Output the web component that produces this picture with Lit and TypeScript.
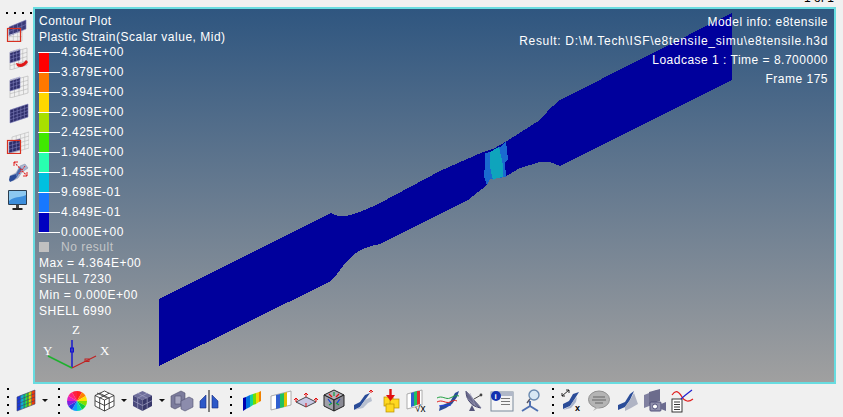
import { LitElement, html, css, svg } from "lit";
import { customElement } from "lit/decorators.js";

const NAVY = "#00009c";

function sheet(x: number, y: number, w: number, h: number, sk: number, cols: number, rows: number, fill: string, stroke: string) {
  const lines = [];
  for (let i = 0; i <= cols; i++) {
    const px = x + (w * i) / cols;
    const top = y + sk - (sk * i) / cols;
    lines.push(svg`<line x1=${px} y1=${top} x2=${px} y2=${top + h} stroke=${stroke} stroke-width="0.6"/>`);
  }
  for (let j = 0; j <= rows; j++) {
    const d = (h * j) / rows;
    lines.push(svg`<line x1=${x} y1=${y + sk + d} x2=${x + w} y2=${y + d} stroke=${stroke} stroke-width="0.6"/>`);
  }
  return svg`<polygon points="${x},${y + sk} ${x + w},${y} ${x + w},${y + h} ${x},${y + sk + h}" fill=${fill}/>${lines}`;
}

const sideIcons = [
  svg`${sheet(4, 10, 13, 13, 0, 3, 3, "none", "#b8b8b8")}
      <polygon points="4,9 21,2 21,11 4,17" fill="#3a3a78"/>${sheet(4, 2, 17, 9, 7, 4, 2, "none", "#7c7cb8")}
      <rect x="2.5" y="10.5" width="13" height="13" fill="none" stroke="#d83020" stroke-width="1.2"/>`,
  svg`${sheet(5, 2, 17, 17, 5, 4, 4, "none", "#b4b4b4")}
      <polygon points="5,7 15,4 15,14 5,17" fill="#30306c"/>${sheet(5, 3, 10, 11, 3, 3, 3, "none", "#8080bc")}
      <path d="M11 17 C16 19 19 17 21 14 L23 16 C20 21 15 22 12 20Z" fill="#e01818"/>`,
  svg`${sheet(5, 2, 18, 17, 5, 4, 4, "none", "#b4b4b4")}
      <polygon points="5,7 15,4 15,14 5,17" fill="#30306c"/>${sheet(5, 3, 10, 11, 3, 3, 3, "none", "#8080bc")}`,
  svg`<polygon points="5,8 23,2 23,15 5,21" fill="#30306c"/>${sheet(5, 2, 18, 13, 6, 5, 4, "none", "#7c7cb8")}`,
  svg`${sheet(7, 2, 17, 16, 5, 4, 4, "none", "#b8b8b8")}
      <polygon points="4,12 15,9 15,20 4,23" fill="#2c2c68"/>${sheet(4, 9, 11, 11, 3, 3, 3, "none", "#8080bc")}
      <rect x="2.5" y="10.5" width="13" height="13" fill="none" stroke="#d83020" stroke-width="1.2"/>`,
  svg`<path d="M5 22 L5 18 L11 15 L15 8 L20 6 L23 10 L17 14 L13 20 L7 23Z" fill="#a8b4d0" stroke="#808ca8" stroke-width=".5"/>
      <path d="M4 22 L5 18 L11 16 L12 19 L9 22 L5 24Z" fill="#2a4c98"/><path d="M11 16 L15 9 L17 11 L12 19Z" fill="#4a6cb0"/>
      <path d="M9 4 L22 18" stroke="#e02020" stroke-width="1.1" stroke-dasharray="2 1"/>
      <path d="M9 4 L13 4 M9 4 L9 8 M22 18 L18 18 M22 18 L22 14" stroke="#e02020" stroke-width="1"/>
      <path d="M20 8 L14 16" stroke="#e02020" stroke-width="1" stroke-dasharray="2 1"/>`,
  svg`<g transform="translate(0,2)"><rect x="3" y="2" width="19" height="15" rx="1" fill="#2c3e50"/>
      <rect x="4" y="3" width="17" height="13" fill="#3c8edc"/>
      <path d="M4 3 H21 V7 C15 10 9 8 4 13Z" fill="#8cc8f0"/>
      <rect x="11" y="17" width="3" height="3" fill="#444"/><rect x="7.5" y="20" width="10" height="2" fill="#222"/></g>`,
];

const dots = svg`<g fill="#000"><rect x="1" y="1" width="2" height="2"/><rect x="1" y="9" width="2" height="2"/><rect x="1" y="17" width="2" height="2"/><rect x="1" y="25" width="2" height="2"/></g>`;
const caret = svg`<polygon points="0,0 6,0 3,3" fill="#111"/>`;

function wheel() {
  const cols = ["#ff2020", "#ff8000", "#ffe000", "#80e000", "#10d040", "#10d0c0", "#10a0ff", "#2040e0", "#8020e0", "#e020c0", "#ff2080", "#ff2040"];
  const out = [];
  for (let i = 0; i < 12; i++) {
    const a = (i * Math.PI) / 6;
    const b = ((i + 1) * Math.PI) / 6;
    out.push(svg`<path d="M10 10 L${10 + 10 * Math.sin(a)} ${10 - 10 * Math.cos(a)} A10 10 0 0 1 ${10 + 10 * Math.sin(b)} ${10 - 10 * Math.cos(b)}Z" fill=${cols[i]}/>`);
  }
  return out;
}

const wire = svg`<g fill="#fff" stroke="#222" stroke-width=".8"><polygon points="10.5,1 20,5.5 20,16 10.5,21 1,16 1,5.5"/><path fill="none" d="M1 5.5 L10.5 10 L20 5.5 M10.5 10 V21 M5.7 3.2 L15 8 M15.2 3.2 L5.8 8 M5.7 8 V18.5 M15.2 8 V18.5 M1 10.7 L10.5 15.5 L20 10.7 M3 3 L13 8"/></g>`;
const solid = svg`<polygon points="10.5,1 20,5.5 10.5,10 1,5.5" fill="#6f6f9c"/><polygon points="1,5.5 10.5,10 10.5,21 1,16" fill="#4a4a7c"/><polygon points="20,5.5 10.5,10 10.5,21 20,16" fill="#38386a"/>
  <g fill="none" stroke="#a0a0c4" stroke-width=".7"><path d="M5.7 3.2 L15 8 M15.2 3.2 L5.8 8 M5.7 8 V18.5 M15.2 8 V18.5 M1 10.7 L10.5 15.5 L20 10.7"/></g>`;
const parts = svg`<path d="M1 6 L11 1 L15 3 V14 L5 19 L1 17Z" fill="#7c7c9c" stroke="#50506c" stroke-width=".6"/><rect x="5" y="6" width="6" height="8" fill="#a8a8c0" stroke="#505070" stroke-width=".6"/><path d="M11 11 L19 7 L23 9 V17 L15 21 L11 19Z" fill="#8c8cac" stroke="#505070" stroke-width=".6"/>`;
const mirror = svg`<rect x="10.5" y="0" width="1" height="22" fill="#111"/><polygon points="8,5 8,18 2,18 2,11" fill="#2c58c8" stroke="#182c80" stroke-width=".6"/><polygon points="14,5 14,18 20,18 20,11" fill="#2c58c8" stroke="#182c80" stroke-width=".6"/>`;
const rainbow = svg`<polygon points="1,8 4,7 4,19 1,21" fill="#0000b0"/><polygon points="4,7 8,5 8,17 4,19" fill="#0070e0"/><polygon points="8,5 11,4 11,15 8,17" fill="#10d0a0"/><polygon points="11,4 14,3 14,14 11,15" fill="#70e000"/><polygon points="14,3 17,2 17,12 14,14" fill="#f0d800"/><polygon points="17,2 19,1 19,11 17,12" fill="#f08000"/>`;
const bars = svg`<polygon points="1,6 21,1 21,15 1,20" fill="#fff" stroke="#999" stroke-width=".8"/><polygon points="6,5 10,4 10,18 6,19" fill="#3060d0"/><polygon points="10,4 14,3 14,17 10,18" fill="#20c060"/><polygon points="14,3 17,2 17,16 14,17" fill="#e0c000"/>`;
const plane = svg`<polygon points="1,9 11,4 21,9 11,14" fill="#c8c8e4" stroke="#222" stroke-width=".8"/><g stroke="#e01010" stroke-width="1" fill="none"><path d="M1 9 V5 M11 4 V0 M21 9 V5 M11 14 V10 M-1 7 L1 5 L3 7 M9 2 L11 0 L13 2 M19 7 L21 5 L23 7"/></g>`;
const cube = svg`<polygon points="11,1 21,6 11,11 1,6" fill="#b0b0b8" stroke="#222"/><polygon points="1,6 11,11 11,22 1,17" fill="#a0a0a8" stroke="#222"/><polygon points="21,6 11,11 11,22 21,17" fill="#8a8a94" stroke="#222"/><g stroke="#e01010" stroke-width="1.2"><path d="M6 5 L9 8 M16 5 L13 8"/></g><g stroke="#1040e0" stroke-width="1.2"><path d="M5 10 L8 14 M17 10 L14 14"/></g><g stroke="#10a040" stroke-width="1.2"><path d="M6 16 L9 14 M16 16 L13 14 M11 3 V7"/></g>`;
const bend = svg`<path d="M2 20 L2 15 L8 12 L13 5 L18 3 L13 10 L8 17Z" fill="#2a4c98"/><path d="M8 17 L13 10 L19 7 L20 11 L16 13 L11 18 L2 20Z" fill="#b8c0d0"/><path d="M19 3 V0 M17 2 L19 0 L21 2" stroke="#e01010" fill="none"/>`;
const drop = svg`<rect x="3" y="8" width="9" height="9" fill="#ffd820" stroke="#b89000" stroke-width=".7"/><rect x="9" y="10" width="9" height="9" fill="#ffd820" stroke="#b89000" stroke-width=".7"/><rect x="5" y="15" width="8" height="8" fill="#ffd820" stroke="#b89000" stroke-width=".7"/><path d="M9.5 0 V8" stroke="#e01010" stroke-width="2.4"/><polygon points="5,6 14,6 9.5,12" fill="#e01010"/>`;
const sqrt = svg`<polygon points="1,5 16,1 16,16 1,20" fill="#fff" stroke="#999" stroke-width=".8"/><polygon points="5,4 8,3 8,17 5,18" fill="#3060d0"/><polygon points="8,3 11,2 11,16 8,17" fill="#20c060"/><polygon points="11,2 14,2 14,15 11,16" fill="#e03030"/><text x="9" y="23" font-size="10" font-family="Liberation Sans" fill="#000">√x</text>`;
const curves = svg`<path d="M13 12 L18 3 L22 1 L20 7 L15 14 L9 18 L2 21 L3 16Z" fill="#2a4c98"/><path d="M0 8 C5 5 9 10 13 8 S20 5 22 6" stroke="#20a040" fill="none"/><path d="M0 12 C5 9 9 14 13 12 S18 10 20 11" stroke="#e02020" fill="none"/><path d="M2 16 C6 14 10 17 14 15" stroke="#2040e0" fill="none"/>`;
const dish = svg`<path d="M3 1 C3 10 9 17 18 18 Z" fill="#6a6a8c" stroke="#44446a"/><path d="M3 1 L18 18 M7 3 L12 15 M3 7 L15 18" stroke="#a0a0bc" stroke-width=".6"/><path d="M11 9 L18 5" stroke="#444"/><circle cx="18" cy="5" r="1.4" fill="#444"/><path d="M9 15 L6 21 H12Z" fill="#55557a"/>`;
const info = svg`<rect x="1" y="2" width="22" height="19" fill="#f4f4f4" stroke="#7a8a9c"/><rect x="1" y="2" width="22" height="4" fill="#b0b8c8"/><rect x="11" y="8" width="9" height="1" fill="#777"/><rect x="11" y="11" width="9" height="1" fill="#777"/><rect x="11" y="14" width="9" height="1" fill="#777"/><circle cx="6" cy="6" r="5" fill="#1030b0"/><text x="4.5" y="9" font-size="8" font-weight="700" font-family="Liberation Sans" fill="#fff">i</text>`;
const search = svg`<path d="M12 12 V17 L4 22 M12 17 L20 22" stroke="#5070b0" stroke-width="2" fill="none"/><circle cx="16" cy="6" r="5" fill="#d8e8f4" stroke="#6a8ab0" stroke-width="1.4"/><path d="M12 10 L9 14" stroke="#556" stroke-width="1.4"/>`;
const bendX = svg`<path d="M2 20 L2 15 L8 12 L12 5 L18 3 L13 11 L9 17Z" fill="#2a4c98"/><path d="M9 17 L13 11 L16 8 L15 13 L10 19 L2 21Z" fill="#a8b4cc"/><path d="M1 7 L8 1 M1 4 V7 H4 M5 1 H8 V4" stroke="#111" fill="none" stroke-width=".9"/><text x="14" y="22" font-size="9" font-weight="700" font-family="Liberation Sans" fill="#000">x</text>`;
const bubble = svg`<ellipse cx="11" cy="9.5" rx="10.5" ry="8.5" fill="#b4b4b4" stroke="#909090"/><path d="M8 17 L5 21 L12 17Z" fill="#b4b4b4"/><path d="M5 7 H17 M4 10 H18 M7 13 H15" stroke="#666"/>`;
const bend2 = svg`<path d="M1 20 L1 15 L8 12 L13 4 L17 1 L13 10 L8 17Z" fill="#2a4c98"/><path d="M8 17 L13 10 L17 3 L21 14 L14 18 L8 21Z" fill="#b0b4c4"/>`;
const camera = svg`<polygon points="1,6 14,1 14,14 1,19" fill="#8080a0"/><polygon points="6,3 17,0 17,12 6,15" fill="#6c6c8c"/><rect x="7" y="13" width="11" height="9" rx="1" fill="#9090ac" stroke="#50507a"/><circle cx="12" cy="17.5" r="2.5" fill="#fff" stroke="#50507a"/><polygon points="18,15 23,13 23,22 18,20" fill="#6c6c90"/>`;
const report = svg`<rect x="1" y="10" width="10" height="13" fill="#fff" stroke="#222" stroke-width=".9"/><path d="M3 13 H9 M3 15.5 H9 M3 18 H9 M3 20.5 H9" stroke="#333"/><path d="M1 6 C5 0 8 3 11 8 S18 13 22 10" stroke="#e02020" fill="none" stroke-width="1.2"/><path d="M10 10 C13 7 17 4 21 1" stroke="#2020d0" fill="none" stroke-width="1.2"/>`;

const bottomItems = [
  { x: 6, w: 4, h: 28, c: dots },
  { x: 16, w: 20, h: 22, c: svg`<polygon points="1,7 4,5.8 4,19.8 1,21" fill="#1838d8"/><polygon points="4,5.8 7,4.6 7,18.6 4,19.8" fill="#10a8e0"/><polygon points="7,4.6 10,3.4 10,17.4 7,18.6" fill="#10d080"/><polygon points="10,3.4 13,2.2 13,16.2 10,17.4" fill="#50d820"/><polygon points="13,2.2 16,1 16,15 13,16.2" fill="#e8d000"/><polygon points="16,1 19,0 19,14 16,15" fill="#f03808"/>${sheet(1, 0, 18, 14, 7, 5, 4, "none", "#40406c")}` },
  { x: 42, w: 6, h: 4, c: caret },
  { x: 57, w: 4, h: 28, c: dots },
  { x: 67, w: 20, h: 20, c: wheel() },
  { x: 94, w: 21, h: 22, c: wire },
  { x: 121, w: 6, h: 4, c: caret },
  { x: 132, w: 21, h: 22, c: solid },
  { x: 159, w: 6, h: 4, c: caret },
  { x: 170, w: 23, h: 22, c: parts },
  { x: 198, w: 22, h: 22, c: mirror },
  { x: 229, w: 4, h: 28, c: dots },
  { x: 242, w: 19, h: 22, c: rainbow },
  { x: 270, w: 22, h: 22, c: bars },
  { x: 295, w: 22, h: 16, c: plane },
  { x: 323, w: 22, h: 23, c: cube },
  { x: 352, w: 22, h: 22, c: bend },
  { x: 381, w: 18, h: 24, c: drop },
  { x: 406, w: 23, h: 24, c: sqrt },
  { x: 437, w: 22, h: 22, c: curves },
  { x: 463, w: 20, h: 22, c: dish },
  { x: 490, w: 24, h: 22, c: info },
  { x: 518, w: 24, h: 23, c: search },
  { x: 551, w: 4, h: 28, c: dots },
  { x: 561, w: 20, h: 23, c: bendX },
  { x: 588, w: 22, h: 21, c: bubble },
  { x: 617, w: 22, h: 22, c: bend2 },
  { x: 643, w: 24, h: 23, c: camera },
  { x: 671, w: 24, h: 24, c: report },
];

const legend = [
  ["4.364E+00", "#ff0000"],
  ["3.879E+00", "#ff7800"],
  ["3.394E+00", "#ffd800"],
  ["2.909E+00", "#a8e000"],
  ["2.425E+00", "#40e800"],
  ["1.940E+00", "#28ffb0"],
  ["1.455E+00", "#00c0e0"],
  ["9.698E-01", "#1878ff"],
  ["4.849E-01", "#0000c0"],
  ["0.000E+00", ""],
];

@customElement("app-root")
export class AppRoot extends LitElement {
  static styles = css`
    :host { display: block; width: 843px; height: 417px; background: #f0f0f0; overflow: hidden; font-family: "Liberation Sans", Arial, sans-serif; }
    .top { height: 7px; overflow: hidden; display: flex; justify-content: flex-end; padding-right: 9px; }
    .pager { font-size: 12px; line-height: 12px; margin-top: -8px; color: #000; height: 12px; }
    .mid { display: flex; height: 377px; }
    .left { width: 33px; flex: none; display: flex; flex-direction: column; align-items: flex-start; padding: 5px 0 0 5px; box-sizing: border-box; }
    .leftdots { display: flex; gap: 6px; height: 2px; margin-left: 1px; }
    .leftdots i { width: 2px; height: 2px; background: #000; display: block; }
    .left-icons { display: flex; flex-direction: column; gap: 4px; margin-top: 4px; }
    .left-icons svg { display: block; width: 24px; height: 24px; }
    .view { position: relative; width: 803px; flex: none; box-sizing: border-box; border: 2px solid #68dce0; background: linear-gradient(180deg, #2f5680 0%, #a0a0a0 100%); color: #fff; font-size: 12px; letter-spacing: 0.5px; overflow: hidden; display: flex; justify-content: space-between; }
    .scene { position: absolute; inset: 0; width: 100%; height: 100%; }
    .info-l, .info-r { position: relative; }
    .info-l { padding: 4px 0 0 4px; }
    .info-r { padding: 4px 6px 0 0; text-align: right; }
    .info-l div, .info-r div { white-space: nowrap; }
    .ln { line-height: 16px; height: 16px; }
    .rn { line-height: 19px; height: 19px; }
    .wide { letter-spacing: 0.68px; }
    .legend { position: relative; margin: -3px 0 0 -1px; }
    .bar { position: absolute; left: 1px; top: 10px; width: 10px; height: 180px; display: flex; flex-direction: column; }
    .bar i { flex: 1; display: block; }
    .row { position: relative; height: 20px; display: flex; align-items: center; line-height: 20px; }
    .tick { width: 22px; height: 1px; background: #fff; flex: none; margin-right: 1px; }
    .nores { display: flex; align-items: center; height: 16px; color: #c4c6c8; margin-top: -3px; }
    .nores i { display: block; width: 10px; height: 10px; background: #c0c0c0; margin-right: 12px; }
    .axes { display: block; margin-top: 3px; }
    .axes text { font-family: "Liberation Serif", serif; font-size: 13px; fill: #fff; letter-spacing: 0; }
    .bottom { height: 33px; display: flex; align-items: center; }
    .bottom svg { display: block; flex: none; overflow: visible; }
  `;

  render() {
    let prev = 0;
    return html`
      <div class="top"><div class="pager">1 of 1</div></div>
      <div class="mid">
        <div class="left">
          <div class="leftdots"><i></i><i></i><i></i><i></i></div>
          <div class="left-icons">
            ${sideIcons.map((ic) => html`<svg viewBox="0 0 24 24">${ic}</svg>`)}
          </div>
        </div>
        <div class="view">
          <svg class="scene" viewBox="35 9 799 373" preserveAspectRatio="none" shape-rendering="crispEdges">
            <path fill=${NAVY} d="M159 299 L331 213 C336 216 341 217 346 216 C352 215 362 212 380 203 L440 171 L483 152 L493 149 L507 141 L540 120 C545 114 550 108 560 100 L732 13 L732 80 L560 166 L550 162 L540 162 L520 168 L505 177 L490 178 L487 185 L468 200 L380 244 C366 246 356 252 350 258 C343 264 337 276 331 281 L159 366 Z"/>
            <path fill="#1a6ad0" d="M485 153 L491 152 L500 147 L506 141 L508 160 L505 162 L506 177 L498 178 L490 179 L487 185 L484 176 L485 165Z"/>
            <path fill="#0fa4bc" d="M490 152 L499 147 L503 165 L503 177 L497 178 L493 180 L490 167Z"/>
          </svg>
          <div class="info-l">
            <div class="ln">Contour Plot</div>
            <div class="ln">Plastic Strain(Scalar value, Mid)</div>
            <div class="legend">
              <div class="bar">${legend.slice(0, 9).map((l) => html`<i style="background:${l[1]}"></i>`)}</div>
              ${legend.map((l) => html`<div class="row"><span class="tick"></span>${l[0]}</div>`)}
            </div>
            <div class="nores"><i></i>No result</div>
            <div class="ln">Max = 4.364E+00</div>
            <div class="ln">SHELL 7230</div>
            <div class="ln">Min = 0.000E+00</div>
            <div class="ln">SHELL 6990</div>
            <svg class="axes" width="80" height="50" viewBox="39 320 80 50">
              <text x="72" y="332">Z</text>
              <text x="43" y="353">Y</text>
              <text x="100" y="353">X</text>
              <line x1="72" y1="366" x2="72" y2="338" stroke="#1010d0" stroke-width="1.4"/>
              <rect x="70.5" y="346" width="3" height="4" fill="none" stroke="#1010d0"/>
              <line x1="72" y1="366" x2="96" y2="354" stroke="#c02020" stroke-width="1.2"/>
              <rect x="85" y="357" width="4" height="2.5" fill="none" stroke="#c02020"/>
              <line x1="72" y1="366" x2="48" y2="354" stroke="#20b030" stroke-width="1.6"/>
            </svg>
          </div>
          <div class="info-r">
            <div class="rn">Model info: e8tensile</div>
            <div class="rn wide">Result: D:\\M.Tech\\ISF\\e8tensile_simu\\e8tensile.h3d</div>
            <div class="rn">Loadcase 1 : Time = 8.700000</div>
            <div class="rn">Frame 175</div>
          </div>
        </div>
      </div>
      <div class="bottom">
        ${bottomItems.map((it) => {
          const m = it.x - prev;
          prev = it.x + it.w;
          return html`<svg style="margin-left:${m}px" width=${it.w} height=${it.h} viewBox="0 0 ${it.w} ${it.h}">${it.c}</svg>`;
        })}
      </div>
    `;
  }
}
